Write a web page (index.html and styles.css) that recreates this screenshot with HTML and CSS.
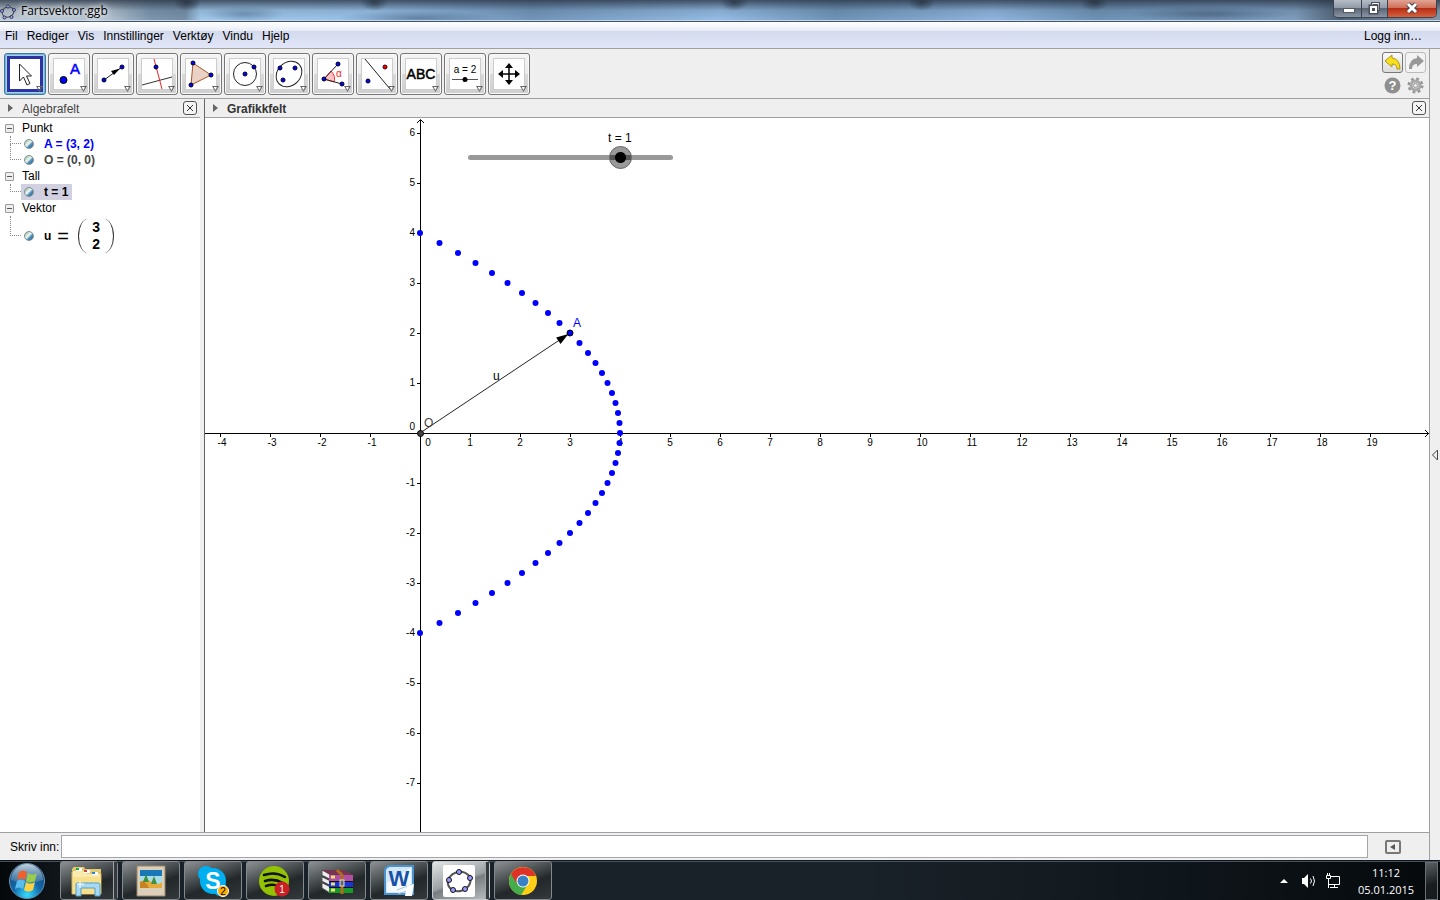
FILE: index.html
```html
<!DOCTYPE html>
<html lang="no">
<head>
    <meta charset="UTF-8">
    <meta name="viewport" content="width=device-width, initial-scale=1.0">
    <title>Fartsvektor.ggb</title>
    <link rel="stylesheet" href="styles.css">
</head>
<body>
    <header class="titlebar">
        <svg class="app-icon" width="16" height="20" viewBox="0 -3 16 20">
            <ellipse cx="8" cy="8" rx="6" ry="5" fill="none" stroke="#444" transform="rotate(-20 8 8)"/>
            <g fill="#a9a9f5" stroke="#335"><circle cx="8" cy="2.500" r="1.500"/><circle cx="14" cy="6" r="1.500"/><circle cx="11.500" cy="13" r="1.500"/><circle cx="4.500" cy="13.500" r="1.500"/><circle cx="2" cy="7" r="1.500"/></g>
        </svg>
        <h1>Fartsvektor.ggb</h1>
        <div class="window-controls">
            <button class="win-min" aria-label="Minimer"><svg width="28" height="18"><rect x="9.500" y="8.500" width="11" height="4" fill="#fff" stroke="#555b66"/></svg></button>
            <button class="win-max" aria-label="Gjenopprett"><svg width="26" height="18"><path d="M10.500 3.500h6v6h-6z" fill="none" stroke="#4a505c" stroke-width="3"/><path d="M10.500 3.500h6v6h-6z" fill="none" stroke="#fff"/><rect x="8" y="6" width="7" height="7" fill="#667" stroke="#4a505c" stroke-width="3"/><rect x="8" y="6" width="7" height="7" fill="#fff"/><rect x="10" y="8" width="3" height="3" fill="#4a505c"/></svg></button>
            <button class="win-close" aria-label="Lukk"><svg width="48" height="18"><path d="M20 4l8 8M28 4l-8 8" stroke="#44434f" stroke-width="5"/><path d="M20 4l8 8M28 4l-8 8" stroke="#fff" stroke-width="3"/></svg></button>
        </div>
    </header>

    <nav class="menubar">
        <a href="#">Fil</a>
        <a href="#">Rediger</a>
        <a href="#">Vis</a>
        <a href="#">Innstillinger</a>
        <a href="#">Verktøy</a>
        <a href="#">Vindu</a>
        <a href="#">Hjelp</a>
        <a href="#" class="login">Logg inn…</a>
    </nav>

    <div class="window">
        <div class="app">
            <div class="toolbar">
                <button class="tool selected" aria-label="Flytt">
                    <svg width="32" height="32"><path d="M10.500 6v17l4-4 3.500 8 3-1.500-3.500-7.500h5z" fill="#fff" stroke="#222"/></svg>
                </button>
                <button class="tool" aria-label="Punkt">
                    <svg width="32" height="32"><circle cx="10.500" cy="22" r="3.500" fill="#00f" stroke="#000"/><text x="17" y="16" class="tool-a">A</text></svg>
                </button>
                <button class="tool" aria-label="Vektor">
                    <svg width="32" height="32"><path d="M7 22L25 9" stroke="#222"/><path d="M23 10.500l-6 6.500-3-4z"/><g class="pt"><circle cx="7" cy="22" r="2"/><circle cx="25" cy="9" r="2"/></g></svg>
                </button>
                <button class="tool" aria-label="Normal">
                    <svg width="32" height="32"><path d="M1 27l30-8" stroke="#333"/><path d="M13 1l8 30" stroke="#e22"/><circle cx="15" cy="9" r="2" class="pt"/></svg>
                </button>
                <button class="tool" aria-label="Mangekant">
                    <svg width="32" height="32"><path d="M8 5l18 12-20 10z" fill="#ead3c6" stroke="#a5522a"/><g class="pt"><circle cx="8" cy="5" r="2"/><circle cx="26" cy="17" r="2"/><circle cx="6" cy="27" r="2"/></g></svg>
                </button>
                <button class="tool" aria-label="Sirkel">
                    <svg width="32" height="32"><circle cx="16" cy="16" r="11.500" fill="none" stroke="#222"/><g class="pt"><circle cx="16" cy="16" r="2"/><circle cx="25" cy="9" r="2"/></g></svg>
                </button>
                <button class="tool" aria-label="Kjeglesnitt">
                    <svg width="32" height="32"><ellipse cx="16" cy="16" rx="14" ry="11.500" fill="none" stroke="#222" transform="rotate(-45 16 16)"/><g class="pt"><circle cx="7" cy="10" r="2"/><circle cx="22" cy="10" r="2"/><circle cx="10" cy="22" r="2"/></g></svg>
                </button>
                <button class="tool" aria-label="Vinkel">
                    <svg width="32" height="32"><path d="M7 21l7-8q5 5 3 11z" fill="#fbc4c4" stroke="#f33"/><path d="M21 6L7 21l18 5" fill="none" stroke="#222"/><text x="19" y="19" class="tool-alpha">α</text><g class="pt"><circle cx="21" cy="6" r="2"/><circle cx="7" cy="21" r="2"/><circle cx="25" cy="26" r="2"/></g></svg>
                </button>
                <button class="tool" aria-label="Speiling">
                    <svg width="32" height="32"><path d="M4 1l25 30" stroke="#222"/><circle cx="7" cy="23" r="2" class="pt"/><circle cx="24" cy="9" r="2" fill="#e00" stroke="#400"/></svg>
                </button>
                <button class="tool" aria-label="Tekst">
                    <svg width="32" height="32"><text x="16" y="21" class="tool-abc">ABC</text></svg>
                </button>
                <button class="tool" aria-label="Glider">
                    <svg width="32" height="32"><text x="16" y="15" class="tool-slider">a = 2</text><path d="M3 21.500h26" stroke="#555"/><circle cx="16" cy="21.500" r="2.500"/></svg>
                </button>
                <button class="tool" aria-label="Flytt grafikkfeltet">
                    <svg width="32" height="32"><path d="M16 8v16M8 16h16" stroke="#000" stroke-width="1.500"/><path d="M16 5l4 5h-8zM16 27l4-5h-8zM5 16l5-4v8zM27 16l-5-4v8z"/></svg>
                </button>

                <div class="side-tools">
                    <button class="small-tool" aria-label="Angre"><svg width="19" height="19"><path d="M2 8l7-6v3q8 1 8 11h-3q0-5-5-5v3z" fill="#f8e11c" stroke="#ad9716"/></svg></button>
                    <button class="small-tool disabled" aria-label="Gjør om"><svg width="19" height="19"><path d="M18 8l-7-6v3q-8 1-8 11h3q0-5 5-5v3z" fill="#999"/></svg></button>
                    <button class="plain-tool" aria-label="Hjelp"><svg width="19" height="19"><circle cx="9.500" cy="9.500" r="8" fill="#8f8f8f"/><text x="9.500" y="14" class="help-mark">?</text></svg></button>
                    <button class="plain-tool" aria-label="Innstillinger"><svg width="19" height="19"><circle cx="9.500" cy="9.500" r="6.500" fill="none" stroke="#959595" stroke-width="3" stroke-dasharray="2.600 2.500"/><circle cx="9.500" cy="9.500" r="4.500" fill="#ddd" stroke="#a8a8a8" stroke-width="3"/><circle cx="9.500" cy="9.500" r="2" fill="#eee" stroke="#999"/></svg></button>
                </div>
            </div>

            <main class="views">
                <section class="algebra">
                    <div class="view-header">
                        <span class="expand"></span>
                        <h2>Algebrafelt</h2>
                        <button class="close" aria-label="Lukk algebrafelt"><svg width="12" height="12"><path d="M3 3l6 6M9 3l-6 6" stroke="#333"/></svg></button>
                    </div>
                    <div class="tree">
                        <h3>Punkt</h3>
                        <ul>
                            <li><i class="marble"></i><span class="value blue">A = (3, 2)</span></li>
                            <li><i class="marble"></i><span class="value gray">O = (0, 0)</span></li>
                        </ul>
                        <h3>Tall</h3>
                        <ul>
                            <li><span class="picked"><i class="marble"></i><span class="value">t = 1</span></span></li>
                        </ul>
                        <h3>Vektor</h3>
                        <ul>
                            <li class="vector-row">
                                <i class="marble"></i>
                                <span class="value">u</span>
                                <span class="equals">=</span>
                                <span class="vector"><span>3</span><span>2</span></span>
                            </li>
                        </ul>
                    </div>
                </section>

                <section class="graphics">
                    <div class="view-header">
                        <span class="expand"></span>
                        <h2>Grafikkfelt</h2>
                        <button class="close" aria-label="Lukk grafikkfelt"><svg width="12" height="12"><path d="M3 3l6 6M9 3l-6 6" stroke="#333"/></svg></button>
                    </div>
                    <div class="plane">
                        <svg id="graph" width="100%" height="100%"></svg>
                        <div class="slider">
                            <label for="t">t = 1</label>
                            <input type="range" id="t" min="-2" max="2" step="0.1" value="1">
                        </div>
                    </div>
                </section>
            </main>

            <form class="inputbar">
                <label for="command">Skriv inn:</label>
                <input type="text" id="command">
                <button type="button" aria-label="Kommandoliste"><svg width="16" height="14"><rect x="1" y="1" width="14" height="12" rx="1" fill="#eee" stroke="#777" stroke-width="2"/><path d="M10 4v6L5 7z" fill="#555"/></svg></button>
            </form>
        </div>
        <aside class="side-strip">
            <button aria-label="Vis sidefelt"><svg width="8" height="12"><path d="M6.500 1v10L1.500 6z" fill="none" stroke="#444"/></svg></button>
        </aside>
    </div>

    <footer class="taskbar">
        <button class="start" aria-label="Start">
            <svg width="38" height="38" viewBox="0 0 38 38">
                <defs>
                    <radialGradient id="orb" cx=".5" cy=".9" r=".9"><stop offset="0" stop-color="#38dcff"/><stop offset=".45" stop-color="#1169ab"/><stop offset="1" stop-color="#1c3e63"/></radialGradient>
                    <linearGradient id="gloss" x2="0" y2="1"><stop offset="0" stop-color="#d5e6f2" stop-opacity=".9"/><stop offset="1" stop-color="#82a6c4" stop-opacity=".3"/></linearGradient>
                </defs>
                <circle cx="19" cy="19" r="17.500" fill="url(#orb)" stroke="#6793b4"/>
                <path d="M3 18a16 16 0 0 1 32 0q-16 6-32 0z" fill="url(#gloss)"/>
                <path d="M11 10q4-3 8 0l-2 8q-4-3-8 0z" fill="#f0602c"/>
                <path d="M20 11q4 3 9 0l-2 8q-5 3-9 0z" fill="#9bcb4a"/>
                <path d="M9 19q4-3 8 0l-2 8q-4-3-8 0z" fill="#5cbcf0"/>
                <path d="M18 20q4 3 9 0l-2 8q-5 3-9 0z" fill="#fdd344"/>
            </svg>
        </button>
        <button class="task stacked" aria-label="Windows Utforsker">
            <svg width="34" height="34" viewBox="0 0 34 34">
                <path d="M3 4q0-1 1-1h10l1 2h16v24H2V5z" fill="#e5cb73"/>
                <path d="M4 6h11l2 3h14v21H2V8z" fill="#f8ebac" stroke="#cfae57"/>
                <path d="M6 4h6v3H6z" fill="#fff"/><path d="M6 4h3v2H6z" fill="#10b52b"/><path d="M14 6h6v3h-6z" fill="#fff"/><path d="M14 6h3v2h-3z" fill="#d8402c"/><path d="M22 8h6v3h-6z" fill="#fff"/><path d="M22 8h3v2h-3z" fill="#2a86d6"/>
                <path d="M3 13h28v17H3z" fill="#f6e08c"/>
                <path d="M6 20q0-1 1-1h21q2 0 2 2v11h-5v-8H11v8H6z" fill="#a9d9f2" stroke="#4f9fcc"/>
                <path d="M10 17v7M7 20h7" stroke="#fff"/>
            </svg>
        </button>
        <button class="task" aria-label="Bilder">
            <svg width="34" height="34" viewBox="0 0 34 34">
                <path d="M3 2h28v30H3z" fill="#dccfb9" stroke="#96866c"/><path d="M6 6h22v18H6z" fill="#1b78b8"/><path d="M6 12h22v8H6z" fill="#a7dde9"/>
                <path d="M6 18q6-4 12 0t10 0v6H6z" fill="#e6a93b"/><path d="M6 18q5-3 9 6H6z" fill="#c98220"/><path d="M12 10l3 8h-6zM20 12l3 8h-6z" fill="#409044"/>
            </svg>
        </button>
        <button class="task" aria-label="Skype">
            <svg width="34" height="34" viewBox="0 0 34 34">
                <circle cx="17" cy="17" r="13" fill="#00aff0"/><circle cx="10" cy="10" r="8" fill="#00aff0"/><circle cx="24" cy="25" r="7" fill="#00aff0"/>
                <text x="17" y="25" class="logo-s">S</text>
                <circle cx="27" cy="27" r="5.500" fill="#ffae00" stroke="#fff"/><text x="27" y="31" class="count">2</text>
            </svg>
        </button>
        <button class="task" aria-label="Spotify">
            <svg width="34" height="34" viewBox="0 0 34 34">
                <circle cx="16" cy="17" r="15" fill="#92c202"/>
                <path d="M6 11q11-4 21 2M7 17q9-3 18 2M8 22q8-3 14 1" fill="none" stroke="#111" stroke-width="2.500" stroke-linecap="round"/>
                <circle cx="24" cy="25" r="7.500" fill="#ca1f24"/><text x="24" y="29" class="count light">1</text>
            </svg>
        </button>
        <button class="task" aria-label="WinRAR">
            <svg width="34" height="34" viewBox="0 0 34 34">
                <path d="M2 6l8 4v19l-8-5z" fill="#eee" stroke="#555"/><path d="M2 12l8 4M2 18l8 4" stroke="#444" stroke-width="2"/>
                <path d="M2 6h22l9 5H10z" fill="#75354f"/><path d="M9 11h24v6H9z" fill="#b04fa4"/><path d="M9 18h24v5H9z" fill="#1937cf"/><path d="M9 24h24v5H9z" fill="#199a28"/>
                <path d="M9 17.500h24M9 23.500h24" stroke="#111"/><path d="M11 13h4M11 20h4M11 26h4" stroke="#eee36b" stroke-width="3"/>
                <path d="M17 6l5 5v19" fill="none" stroke="#b16b20" stroke-width="3"/><rect x="20" y="16" width="4" height="6" fill="#666" stroke="#ddd"/>
            </svg>
        </button>
        <button class="task" aria-label="Word">
            <svg width="34" height="34" viewBox="0 0 34 34">
                <path d="M8 2h23v28H3V7q0-4 5-5z" fill="#d2e7f7" stroke="#4a93cf" stroke-width="2"/><path d="M5 19L29 4v24H5z" fill="#f4f9fd"/>
                <path d="M15 26l16-6M16 30l14-5" stroke="#a7c5de"/><text x="17" y="22" class="logo-w">W</text><path d="M25 22l7-2-2 12h-7z" fill="#fff"/>
            </svg>
        </button>
        <button class="task stacked active" aria-label="GeoGebra">
            <svg width="34" height="34" viewBox="0 0 34 34">
                <rect x="1" y="1" width="32" height="32" rx="2" fill="#fff"/>
                <ellipse cx="17" cy="17.500" rx="11.500" ry="9.500" fill="none" stroke="#555" stroke-width="2" transform="rotate(-15 17 17)"/>
                <g fill="#9999ff" stroke="#111"><circle cx="17" cy="8" r="2.500"/><circle cx="28" cy="14" r="2.500"/><circle cx="23" cy="25" r="2.500"/><circle cx="11" cy="26" r="2.500"/><circle cx="7" cy="16" r="2.500"/></g>
            </svg>
        </button>
        <button class="task" aria-label="Chrome">
            <svg width="34" height="34" viewBox="0 0 34 34">
                <circle cx="17" cy="17" r="14" fill="#fdd017"/>
                <path d="M5 10a14 14 0 0 0 10 21l7-11-5-3z" fill="#45ad49"/>
                <path d="M5 10a14 14 0 0 1 25 2H17l-6 8z" fill="#df3226"/>
                <circle cx="17" cy="17" r="6.500" fill="#fff"/><circle cx="17" cy="17" r="5.500" fill="#3a80c7"/>
            </svg>
        </button>

        <div class="tray">
            <svg width="8" height="6"><path d="M4 1l4 4H0z" fill="#fff"/></svg>
            <svg class="speaker" width="16" height="16"><path d="M1 5h2l4-4v14l-4-4H1z" fill="#fff"/><path d="M9.500 5.500q2 2.500 0 5M12 3q3 5 0 10" fill="none" stroke="#fff"/></svg>
            <svg width="16" height="16"><path d="M6 3.500h8.500v8H4M5 14.500h8M9.500 12v2" fill="none" stroke="#fff"/><path d="M1.500 2.500h4v3h-4zM3.500 5v10M2.500 0v2M4.500 0v2" fill="none" stroke="#fff"/></svg>
        </div>
        <div class="clock"><time>11:12</time><span>05.01.2015</span></div>
        <button class="show-desktop" aria-label="Vis skrivebordet"></button>
    </footer>

    <script src="script.js"></script>
</body>
</html>
```
FILE: styles.css
```css
*, *::before, *::after {
    margin: 0;
    padding: 0;
    box-sizing: border-box;
}

body {
    display: flex;
    flex-direction: column;
    height: 100vh;
    overflow: hidden;
    background: #efefef;
    color: #000;
    font-family: "Liberation Sans", Arial, sans-serif;
    font-size: 12px;
}

button {
    border: none;
    background: none;
    font: inherit;
}

svg {
    display: block;
}

h1, h2, h3 {
    font-size: 12px;
    font-weight: normal;
}

a {
    color: #000;
    text-decoration: none;
}

/* title bar */
.titlebar {
    display: flex;
    align-items: center;
    height: 22px;
    flex-shrink: 0;
    border-bottom: 1px solid #43536a;
    box-shadow: inset 0 -1px #c5d6e8;
    background:
        radial-gradient(ellipse 14px 9px at 13% 2px, rgba(35, 45, 60, 0.7), transparent),
        radial-gradient(ellipse 14px 9px at 26% 2px, rgba(35, 45, 60, 0.7), transparent),
        radial-gradient(ellipse 14px 9px at 51% 2px, rgba(35, 45, 60, 0.7), transparent),
        radial-gradient(ellipse 14px 9px at 64% 2px, rgba(35, 45, 60, 0.7), transparent),
        radial-gradient(ellipse 14px 9px at 76% 2px, rgba(35, 45, 60, 0.7), transparent),
        radial-gradient(ellipse 40px 8px at 17% 14px, rgba(70, 100, 135, 0.5), transparent),
        radial-gradient(ellipse 80px 7px at 29% 18px, rgba(60, 85, 115, 0.5), transparent),
        radial-gradient(ellipse 80px 8px at 84% 14px, rgba(60, 80, 105, 0.6), transparent),
        linear-gradient(rgba(40, 52, 68, 0.8), rgba(60, 80, 100, 0.2) 50%, transparent),
        linear-gradient(90deg, #c3ced8 0, #b6c4d1 110px, #7e98b0 150px, #7790a9 185px, #a3cbed 200px, #9bc5ec 370px, #7396bb 37%, #98c0e9 50%, #6f95b8 58%, #92b8e2 69%, #6f94b7 76%, #7ea1c7 86%, #7f9dbd 90%, #4f6073 93%, #8899aa 100%);
}

.app-icon {
    flex-shrink: 0;
}

.titlebar h1 {
    margin-left: 5px;
    font-family: "Open Sans", "Noto Sans", sans-serif;
    font-size: 12px;
    line-height: 20px;
    text-shadow: 0 0 6px #fff, 0 0 6px #fff;
}

.window-controls {
    display: flex;
    align-self: flex-start;
    margin-left: auto;
    margin-right: 3px;
    height: 18px;
    border: 1px solid #3c4350;
    border-top: none;
    border-radius: 0 0 5px 5px;
    overflow: hidden;
}

.window-controls button {
    width: 28px;
    background: linear-gradient(#b5bcc6, #919ba7 45%, #5c6675 50%, #8a95a5);
    border-right: 1px solid #3c4350;
}

.window-controls .win-max {
    width: 26px;
}

.window-controls .win-close {
    width: 48px;
    border-right: none;
    background: linear-gradient(#e0a493, #d0705a 45%, #b62d15 50%, #d8613d);
}

/* menu */
.menubar {
    display: flex;
    align-items: center;
    gap: 9px;
    height: 27px;
    flex-shrink: 0;
    padding: 2px 18px 0 5px;
    border-bottom: 1px solid #a0a0a0;
    background: linear-gradient(#fff, #e8ecf6 9px, #d4daed 9px, #e1e7f8);
}

.login {
    margin-left: auto;
}

.window {
    display: flex;
    flex: 1;
    min-height: 0;
}

.app {
    display: flex;
    flex-direction: column;
    flex: 1;
    min-width: 0;
}

/* toolbar */
.toolbar {
    display: flex;
    gap: 2px;
    height: 50px;
    padding: 4px 3px 0 4px;
    border-bottom: 1px solid #a0a0a0;
}

.tool {
    position: relative;
    width: 42px;
    height: 42px;
    padding: 4px;
    border: 1px solid #777;
    border-radius: 3px;
    background: linear-gradient(#f4f4f4, #ececec 50%, #dadada 50%, #cfcfcf);
    box-shadow: inset 0 0 0 1px #fafafa;
}

.tool > svg {
    background: #fff;
    box-shadow: inset 0 0 0 1px #ccc;
}

.tool::after {
    content: "";
    position: absolute;
    right: 2px;
    bottom: 2px;
    width: 7px;
    height: 6px;
    background: #666;
    clip-path: polygon(0 0, 100% 0, 50% 100%, 0 0, 25% 17%, 50% 75%, 75% 17%, 25% 17%);
}

.tool.selected {
    border-color: #3b7aa0;
    background: #a7cfe6;
    box-shadow: inset 0 0 0 1px #79b5d8;
}

.tool.selected > svg {
    outline: 3px solid #2c33a5;
    outline-offset: -1px;
}

.pt {
    fill: #00f;
    stroke: #002;
}

.tool-a {
    fill: #00f;
    font-size: 15px;
    stroke: #00f;
    stroke-width: 0.5px;
}

.tool-alpha {
    fill: #f22;
    font-size: 10px;
}

.tool-abc {
    font-size: 14px;
    text-anchor: middle;
    stroke: #000;
    stroke-width: 0.5px;
}

.tool-slider {
    font-size: 10px;
    text-anchor: middle;
}

.side-tools {
    display: grid;
    grid-template-columns: 21px 21px;
    grid-auto-rows: 21px;
    gap: 2px;
    margin-left: auto;
    margin-top: -1px;
}

.small-tool {
    border: 1px solid #777;
    border-radius: 3px;
    background: linear-gradient(#fafafa, #dcdcdc);
}

.small-tool.disabled {
    border-color: #bbb;
    background: #f3f3f3;
}

.plain-tool {
    padding: 1px;
}

.help-mark {
    fill: #fff;
    font-size: 13px;
    font-weight: bold;
    text-anchor: middle;
}

/* views */
.views {
    display: flex;
    flex: 1;
    min-height: 0;
}

.algebra {
    width: 205px;
    border-right: 1px solid #666;
    box-shadow: inset -4px 0 #efefef;
    background: #fff;
}

.algebra .view-header {
    margin-right: 4px;
}

.graphics {
    display: flex;
    flex-direction: column;
    flex: 1;
    min-width: 0;
    background: #fff;
}

.view-header {
    display: flex;
    align-items: center;
    height: 19px;
    flex-shrink: 0;
    padding: 0 3px 0 8px;
    border-bottom: 1px solid #a0a0a0;
    background: #efefef;
}

.view-header h2 {
    margin-left: 9px;
    padding-top: 1px;
    color: #444;
}

.graphics .view-header h2 {
    color: #333;
    font-weight: bold;
}

.expand {
    width: 5px;
    height: 8px;
    background: #666;
    clip-path: polygon(0 0, 100% 50%, 0 100%);
}

.close {
    width: 14px;
    height: 14px;
    margin-left: auto;
    border: 1px solid #555;
    border-radius: 3px;
    background: #f4f4f4;
}

/* algebra tree */
.tree {
    padding: 2px 0 0 5px;
    line-height: 17px;
}

.tree h3 {
    display: flex;
    align-items: center;
    height: 16px;
    gap: 8px;
}

.tree h3::before {
    content: "";
    width: 9px;
    height: 9px;
    border: 1px solid #999;
    border-radius: 1px;
    background: linear-gradient(#555, #555) center / 5px 1px no-repeat, #eee;
}

.tree ul {
    list-style: none;
    padding-left: 5px;
}

.tree li {
    display: flex;
    align-items: center;
    height: 16px;
}

.tree li::before {
    content: "";
    align-self: flex-start;
    width: 11px;
    height: 50%;
    border: dotted #888;
    border-width: 0 0 1px 1px;
}

.tree li + li::before {
    height: 16px;
    margin-top: -8px;
}

.marble {
    width: 10px;
    height: 10px;
    flex-shrink: 0;
    margin: 0 10px 0 3px;
    border: 1px solid #7d9096;
    border-radius: 50%;
    background: linear-gradient(135deg, #a9c9b4 15%, #f2faf0 45%, #4c8db8 65%, #2d6796);
}

.value {
    font-weight: bold;
}

.blue {
    color: #00f;
}

.gray {
    color: #444;
}

.picked {
    display: flex;
    align-items: center;
    height: 16px;
    padding-right: 4px;
    background: #d0d0e0;
}

.tree .vector-row {
    height: 40px;
}

.equals {
    margin: 0 9px 0 6px;
    font-size: 20px;
}

.vector {
    display: flex;
    flex-direction: column;
    width: 36px;
    height: 34px;
    border: solid #333;
    border-width: 0 1px;
    border-radius: 10px / 17px;
    text-align: center;
    font-size: 14px;
    font-weight: bold;
}

/* drawing area */
.plane {
    position: relative;
    flex: 1;
    min-height: 0;
}

#graph {
    position: absolute;
}

.axis {
    stroke: #000;
    fill: none;
    shape-rendering: crispEdges;
}

.arrow {
    stroke: #000;
    fill: none;
}

.tick-label {
    font-size: 10px;
    text-anchor: middle;
}

.tick-label.y {
    text-anchor: end;
}

.trace {
    fill: #00f;
}

.name {
    font-size: 12px;
}

.name.blue {
    fill: #00f;
}

.name.gray {
    fill: #444;
}

/* the input is a thumb wider than the drawn track, so the thumb centre runs from end to end */
.slider {
    position: absolute;
    left: 254px;
    top: 12px;
    width: 223px;
}

.slider::before {
    content: "";
    position: absolute;
    left: 9px;
    right: 9px;
    top: 25px;
    height: 5px;
    border-radius: 3px;
    background: #999;
}

.slider label {
    display: block;
    margin-left: 149px;
    line-height: 16px;
}

.slider input {
    position: relative;
    display: block;
    width: 100%;
    height: 23px;
    appearance: none;
    background: none;
}

.slider input::-webkit-slider-thumb {
    appearance: none;
    width: 23px;
    height: 23px;
    border: 1px solid #666;
    border-radius: 50%;
    background: radial-gradient(circle, #000 5px, transparent 6px), linear-gradient(#555, #555) center / 100% 5px no-repeat, #999;
}

/* input bar */
.inputbar {
    display: flex;
    align-items: center;
    height: 28px;
    flex-shrink: 0;
    padding: 0 28px 0 10px;
    border-top: 1px solid #a0a0a0;
}

.inputbar input {
    flex: 1;
    height: 23px;
    margin: 0 17px 0 2px;
    padding: 0 4px;
    border: 1px solid #a4a4aa;
    font: inherit;
}

.side-strip {
    display: flex;
    align-items: center;
    width: 11px;
    border-left: 1px solid #a0a0a0;
    padding-left: 1px;
}

/* taskbar */
.taskbar {
    display: flex;
    align-items: center;
    gap: 4px;
    height: 40px;
    flex-shrink: 0;
    padding: 0 2px 0 8px;
    border-top: 1px solid #10161c;
    box-shadow: inset 0 1px #45525e;
    background: linear-gradient(90deg, #05080b, #1a2229 8%, #1a2229 60%, #10171c 80%, #05090c);
}

.start {
    width: 38px;
    margin-right: 10px;
}

.task {
    display: flex;
    align-items: center;
    justify-content: center;
    position: relative;
    width: 58px;
    height: 39px;
    border: 1px solid #84898d;
    border-radius: 3px;
    background: linear-gradient(160deg, #8d9194, #4e5356 35%, #22272a 60%, #34393c);
}

.task.stacked {
    padding-right: 5px;
}

.task.stacked::after {
    content: "";
    position: absolute;
    right: 0;
    top: 0;
    width: 4px;
    height: 37px;
    border-left: 1px solid #a0a4a7;
    background: #33393d;
}

.task.active {
    border-color: #c9cccd;
    background: linear-gradient(160deg, #e3e5e6, #9ca1a4 50%, #777d80 55%, #b9bdbf);
}

.logo-s {
    fill: #fff;
    font-size: 23px;
    font-weight: bold;
    text-anchor: middle;
}

.logo-w {
    fill: #1552a8;
    font-size: 22px;
    font-weight: bold;
    text-anchor: middle;
}

.count {
    font-size: 10px;
    text-anchor: middle;
}

.count.light {
    fill: #fff;
}

.tray {
    display: flex;
    align-items: center;
    gap: 8px;
    margin-left: auto;
}

.tray .speaker {
    margin-left: 5px;
}

.clock {
    display: flex;
    flex-direction: column;
    width: 70px;
    margin-left: 6px;
    color: #fff;
    font-family: "Open Sans", "Noto Sans", sans-serif;
    font-size: 11px;
    line-height: 17px;
    text-align: center;
}

.show-desktop {
    width: 13px;
    height: 38px;
    border: 1px solid #697075;
    background: linear-gradient(160deg, #5a6063, #181c1f 60%);
}
```
FILE: script.js
```js
const SVG = 'http://www.w3.org/2000/svg';
const graph = document.getElementById('graph');

// origin and pixels per unit in the drawing area
const ox = 215;
const oy = 315;
const unit = 50;

function add(tag, attrs, text, parent = graph) {
    const el = document.createElementNS(SVG, tag);
    for (const key in attrs) el.setAttribute(key, attrs[key]);
    if (text !== undefined) el.textContent = text;
    parent.appendChild(el);
    return el;
}

function drawAxes() {
    add('line', { x1: 0, y1: oy + 0.5, x2: '100%', y2: oy + 0.5, class: 'axis' });
    add('line', { x1: ox + 0.5, y1: 2, x2: ox + 0.5, y2: '100%', class: 'axis' });
    add('path', { d: `M${ox - 3} 5l3.500-3.500 3.500 3.500`, class: 'arrow' });
    const tip = add('svg', { x: '100%', y: oy, overflow: 'visible' });
    add('path', { d: 'M-4-3l3.500 3.500-3.500 3.500', class: 'arrow' }, undefined, tip);

    for (let n = -4; n <= 19; n++) {
        const x = ox + n * unit;
        if (n !== 0) add('line', { x1: x + 0.5, y1: oy, x2: x + 0.5, y2: oy + 4, class: 'axis' });
        const shift = n === 0 ? 8 : (n < 0 || n > 9 ? 2 : 0);
        add('text', { x: x + shift, y: oy + 13, class: 'tick-label' }, n);
    }
    for (let n = -7; n <= 6; n++) {
        const y = oy - n * unit;
        if (n !== 0) add('line', { x1: ox - 3, y1: y + 0.5, x2: ox, y2: y + 0.5, class: 'axis' });
        add('text', { x: ox - 5, y: n === 0 ? y - 3 : y + 3, class: 'tick-label y' }, n);
    }
}

// trace of A = (4 - t^2, 2t)
function drawTrace() {
    for (let i = -20; i <= 20; i++) {
        const t = i / 10;
        add('circle', { cx: ox + (4 - t * t) * unit, cy: oy - 2 * t * unit, r: 3, class: 'trace' });
    }
}

function drawVector(x, y) {
    const px = ox + x * unit;
    const py = oy - y * unit;
    const angle = Math.atan2(py - oy, px - ox) * 180 / Math.PI;
    add('line', { x1: ox, y1: oy, x2: px, y2: py, stroke: '#222' });
    add('path', { d: 'M-2 0l-12 4v-8z', transform: `translate(${px} ${py}) rotate(${angle})` });
    add('circle', { cx: px, cy: py, r: 3, fill: '#00f', stroke: '#000' });
    add('circle', { cx: ox + 0.5, cy: oy + 0.5, r: 3, fill: '#444', stroke: '#000' });
    add('text', { x: px + 3, y: py - 6, class: 'name blue' }, 'A');
    add('text', { x: ox + 4, y: oy - 6, class: 'name gray' }, 'O');
    add('text', { x: ox + 73, y: oy - 53, class: 'name' }, 'u');
}

drawAxes();
drawTrace();
drawVector(3, 2);
```
